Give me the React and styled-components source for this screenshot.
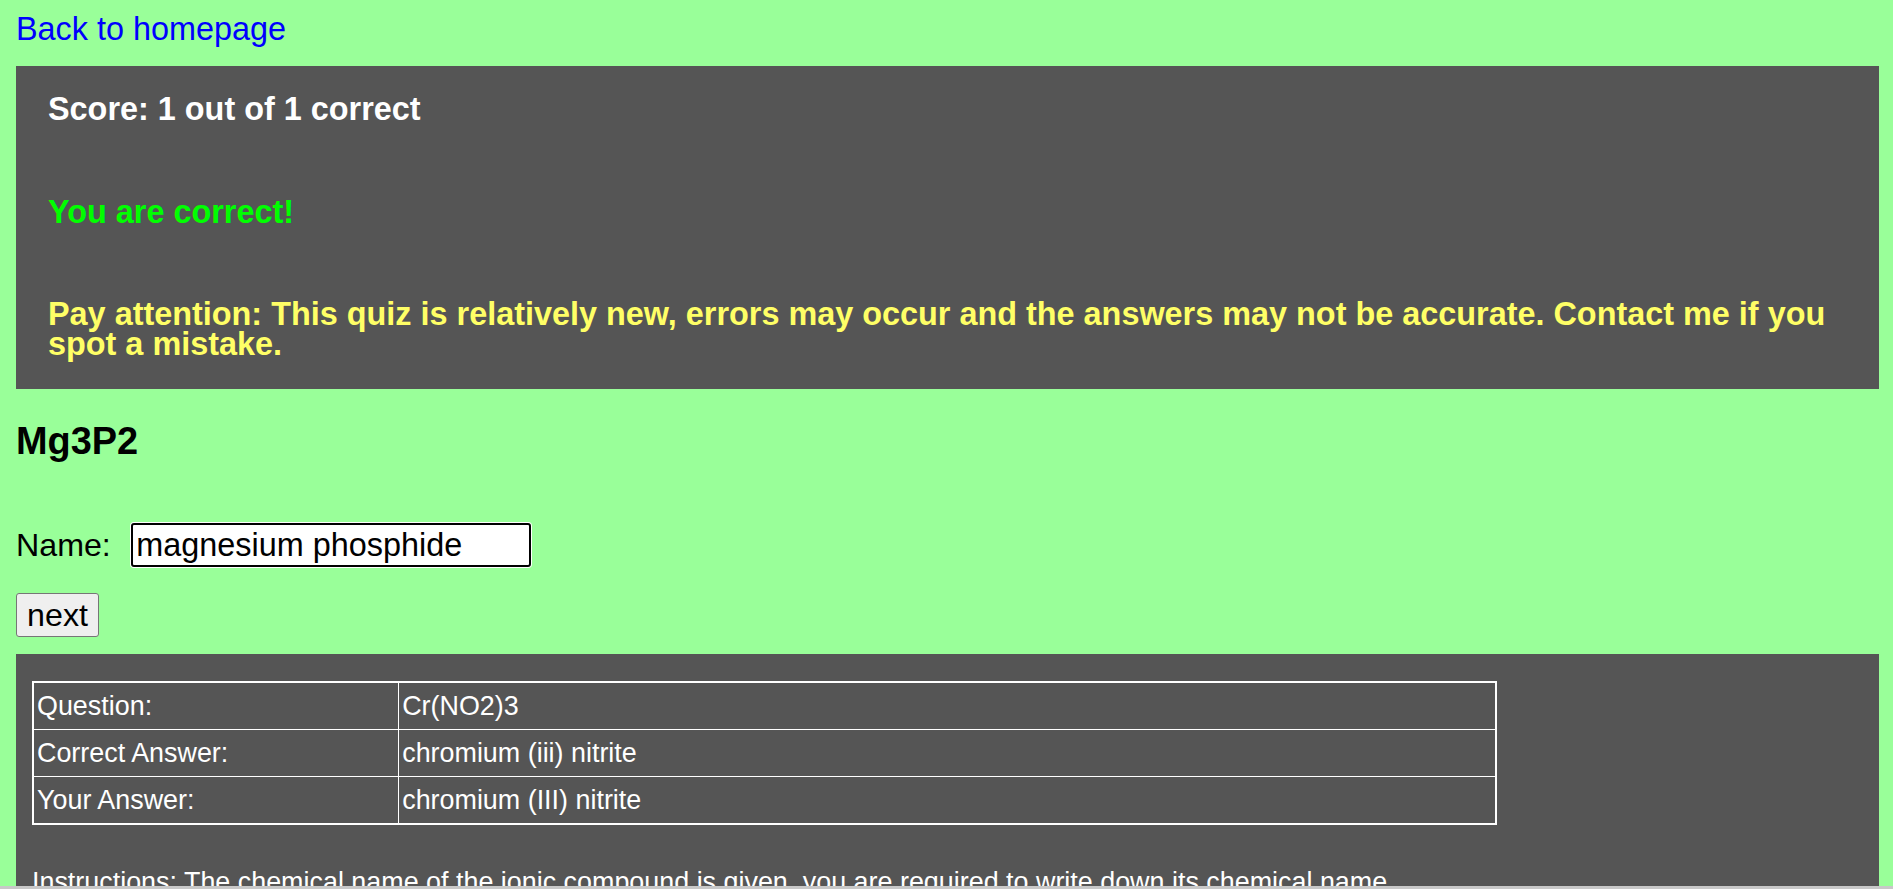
import React, { useEffect, useRef } from "react";
import styled, { createGlobalStyle } from "styled-components";

const GlobalStyle = createGlobalStyle`
  html, body {
    margin: 0;
    padding: 0;
    background: #99ff99;
    overflow: hidden;
  }
  body {
    font-family: "Liberation Sans", Arial, sans-serif;
    color: #000;
  }
`;

const Page = styled.div`
  padding: 11px 14px 0 16px;
`;

const BackLink = styled.a`
  display: inline-block;
  font-size: 32.4px;
  line-height: 37px;
  color: #0000ff;
  text-decoration: none;
`;

const Panel = styled.section`
  background: #555555;
  margin-top: ${(p) => p.$top}px;
  padding: ${(p) => p.$pad};
`;

const ScoreLine = styled.h4`
  margin: 0;
  font-size: 32.4px;
  line-height: 37px;
  font-weight: bold;
  color: #ffffff;
`;

const Message = styled.p`
  margin: ${(p) => p.$gap}px 0 0 0;
  font-size: 32.4px;
  line-height: ${(p) => p.$lh}px;
  font-weight: bold;
  color: ${(p) => p.$color};
`;

const Formula = styled.h3`
  margin: 31px 0 0 0;
  font-size: 37.9px;
  line-height: 43px;
  font-weight: bold;
`;

const NameRow = styled.div`
  margin-top: 60px;
  display: flex;
  align-items: center;
  gap: 20px;
  height: 44px;
`;

const Label = styled.label`
  font-size: 32.2px;
  line-height: 37px;
`;

const NameInput = styled.input`
  box-sizing: border-box;
  width: 400px;
  height: 44px;
  padding: 0 3.5px;
  border: 2px solid #000;
  border-radius: 3px;
  box-shadow: 0 0 0 1px #fff;
  outline: none;
  background: #fff;
  font-family: "Liberation Sans", Arial, sans-serif;
  font-size: 32.4px;
  color: #000;
  caret-color: #000;
`;

const NextButton = styled.button`
  display: block;
  margin-top: 26px;
  box-sizing: border-box;
  width: 83px;
  height: 44px;
  padding: 0;
  background: #efefef;
  border: 1px solid #767676;
  border-radius: 3px;
  font-family: "Liberation Sans", Arial, sans-serif;
  font-size: 32.2px;
  color: #000;
`;

const ResultTable = styled.table`
  width: 80%;
  border-collapse: collapse;
  border: 2px solid #fff;
  color: #fff;
  font-size: 26.9px;
`;

const Cell = styled.td`
  border: 1px solid #fff;
  padding: 8px 3px 7px 3px;
  line-height: 31px;
  text-align: left;
  vertical-align: middle;
  width: ${(p) => (p.$label ? "25%" : "auto")};
`;

const Instructions = styled.p`
  margin: 42px 0 0 0;
  font-size: 26.9px;
  line-height: 31px;
  color: #fff;
`;

const BottomEdge = styled.div`
  position: fixed;
  left: 0;
  right: 0;
  bottom: 0;
  height: 3px;
  background: #c8c8c8;
`;

const rows = [
  ["Question:", "Cr(NO2)3"],
  ["Correct Answer:", "chromium (iii) nitrite"],
  ["Your Answer:", "chromium (III) nitrite"],
];

export default function App() {
  const inputRef = useRef(null);
  useEffect(() => {
    const el = inputRef.current;
    if (el) {
      el.focus();
      const n = el.value.length;
      el.setSelectionRange(n, n);
    }
  }, []);

  return (
    <>
      <GlobalStyle />
      <Page>
        <BackLink href="#">Back to homepage</BackLink>
        <Panel $top={18} $pad="25px 32px 30px 32px">
          <ScoreLine>Score: 1 out of 1 correct</ScoreLine>
          <Message $gap={66} $lh={37} $color="#00ff00">
            You are correct!
          </Message>
          <Message $gap={68} $lh={30} $color="#ffff66">
            Pay attention: This quiz is relatively new, errors may occur and the
            answers may not be accurate. Contact me if you spot a mistake.
          </Message>
        </Panel>
        <Formula>Mg3P2</Formula>
        <NameRow>
          <Label htmlFor="name">Name:</Label>
          <NameInput
            id="name"
            ref={inputRef}
            defaultValue="magnesium phosphide"
          />
        </NameRow>
        <NextButton>next</NextButton>
        <Panel $top={17} $pad="27px 16px 40px 16px">
          <ResultTable>
            <tbody>
              {rows.map(([k, v]) => (
                <tr key={k}>
                  <Cell $label>{k}</Cell>
                  <Cell>{v}</Cell>
                </tr>
              ))}
            </tbody>
          </ResultTable>
          <Instructions>
            Instructions: The chemical name of the ionic compound is given, you
            are required to write down its chemical name.
          </Instructions>
        </Panel>
      </Page>
      <BottomEdge />
    </>
  );
}
